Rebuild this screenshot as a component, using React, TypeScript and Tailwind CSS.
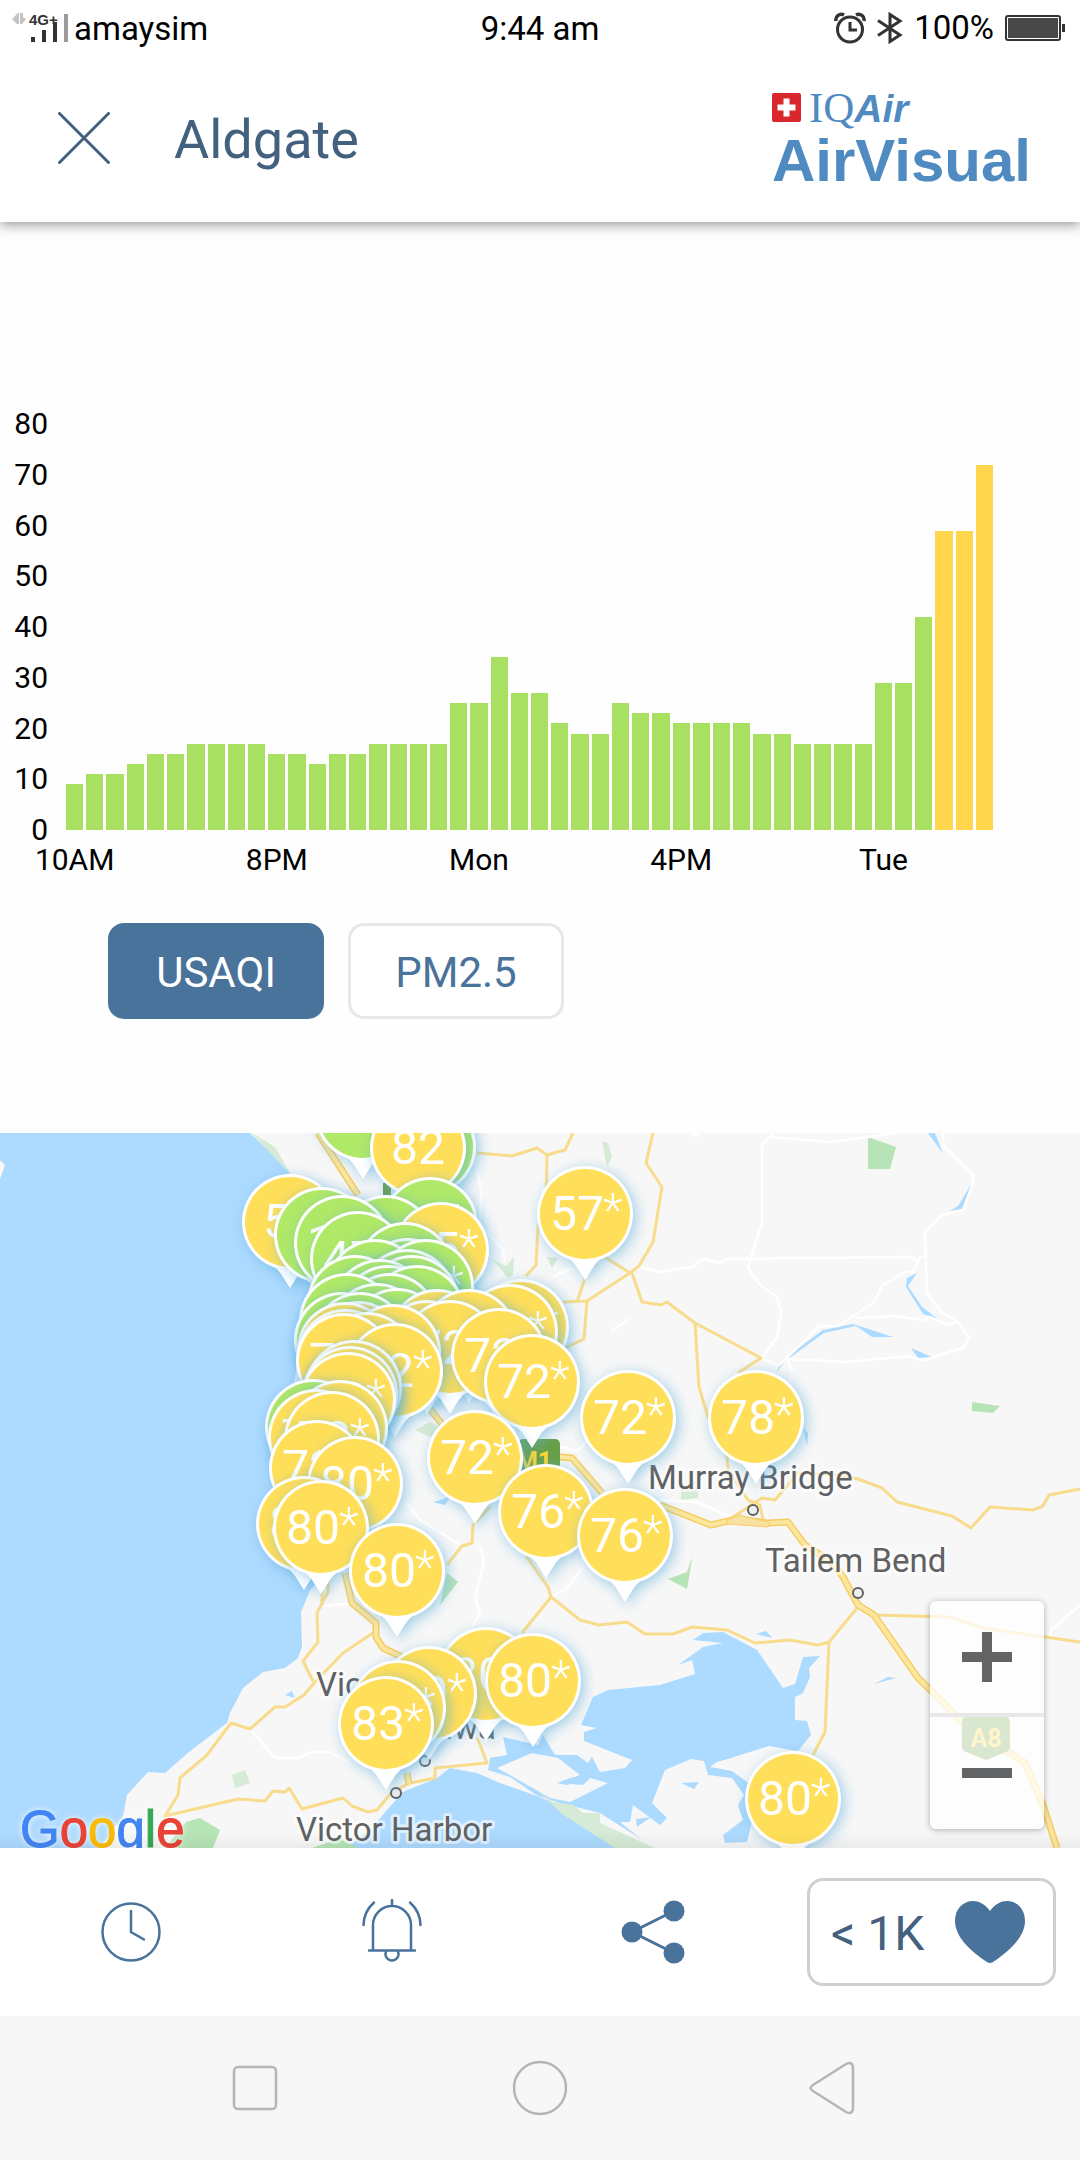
import { useState } from 'react';
import clsx from 'clsx';

type Metric = 'USAQI' | 'PM2.5';
type Level = 'good' | 'moderate';

interface Pin {
  x: number;
  y: number;
  level: Level;
  value?: string;
  estimated?: boolean;
}

const HOURS = [
  9, 11, 11, 13, 15, 15, 17, 17, 17, 17, 15, 15, 13, 15, 15, 17, 17, 17, 17, 25, 25, 34, 27, 27, 21,
  19, 19, 25, 23, 23, 21, 21, 21, 21, 19, 19, 17, 17, 17, 17, 29, 29, 42, 59, 59, 72,
];
const MAX_AQI = 80;
const Y_TICKS = [80, 70, 60, 50, 40, 30, 20, 10, 0];
const X_TICKS: Record<number, string> = { 0: '10AM', 10: '8PM', 20: 'Mon', 30: '4PM', 40: 'Tue' };

const good = (x: number, y: number, value?: string, estimated = true): Pin => ({
  x,
  y,
  level: 'good',
  value,
  estimated,
});
const moderate = (x: number, y: number, value?: string, estimated = true): Pin => ({
  x,
  y,
  level: 'moderate',
  value,
  estimated,
});

// Painted in order, the later ones on top
const PINS: Pin[] = [
  good(363, 1113),
  good(428, 1147),
  moderate(418, 1148, '82', false),
  moderate(585, 1214, '57'),
  moderate(290, 1222, '52', false),
  good(430, 1225, '21'),
  good(322, 1235),
  good(386, 1243),
  good(342, 1243, '14'),
  moderate(441, 1250, '55'),
  good(358, 1259, '47'),
  good(405, 1270),
  good(408, 1286),
  good(375, 1287),
  good(426, 1287, '38'),
  good(407, 1297),
  good(412, 1303),
  good(355, 1303),
  good(380, 1307),
  good(388, 1313),
  good(417, 1313),
  good(390, 1321),
  good(347, 1321),
  moderate(521, 1327, '72'),
  good(377, 1331),
  moderate(510, 1332, '72'),
  good(397, 1336),
  moderate(437, 1337),
  moderate(469, 1337),
  good(342, 1340),
  good(360, 1340),
  moderate(427, 1348),
  moderate(450, 1348, '72'),
  moderate(358, 1349),
  moderate(345, 1350),
  moderate(393, 1352),
  moderate(499, 1356, '72'),
  moderate(345, 1357),
  moderate(367, 1360),
  moderate(344, 1361, '72'),
  moderate(395, 1371, '72'),
  moderate(532, 1382, '72'),
  moderate(354, 1388),
  moderate(350, 1394),
  moderate(348, 1400, '72'),
  moderate(628, 1418, '72'),
  moderate(756, 1418, '78'),
  good(313, 1427),
  moderate(340, 1428),
  moderate(316, 1437, '72'),
  moderate(332, 1439, '72'),
  moderate(475, 1458, '72'),
  moderate(317, 1468, '72'),
  moderate(355, 1484, '80'),
  moderate(546, 1512, '76'),
  moderate(304, 1524, '80'),
  moderate(321, 1528, '80'),
  moderate(625, 1536, '76'),
  moderate(397, 1571, '80'),
  moderate(486, 1675, '80'),
  moderate(533, 1681, '80'),
  moderate(429, 1694, '80'),
  moderate(398, 1708, '80'),
  moderate(386, 1724, '83'),
  moderate(793, 1799, '80'),
];

const TOWNS = [
  { name: 'Murray Bridge', x: 648, y: 1489, dot: [753, 1510] },
  { name: 'Tailem Bend', x: 765, y: 1572, dot: [858, 1593] },
  { name: 'Vic', x: 316, y: 1696 },
  { name: 'Goolwa', x: 385, y: 1739, dot: [425, 1761] },
  { name: 'Victor Harbor', x: 296, y: 1841, dot: [396, 1793] },
];

const WATER = [
  '0,1133 250,1133 269,1151 289,1172 310,1230 318,1300 300,1340 292,1400 300,1450 310,1500 320,1580 310,1590 301,1612 302,1647 298,1658 285,1668 263,1672 243,1688 230,1713 227,1723 189,1752 165,1773 148,1772 127,1795 123,1816 100,1848 0,1848',
  // ocean south of the peninsula
  '345,1848 370,1830 387,1810 403,1792 437,1778 450,1768 477,1773 500,1783 537,1796 560,1806 600,1825 640,1848',
  // lakes and the lagoon
  '503,1737 507,1755 490,1758 488,1770 510,1777 538,1796 560,1803 600,1813 655,1848 750,1848 747,1842 760,1790 747,1782 732,1771 710,1767 717,1762 728,1759 769,1746 798,1751 811,1735 807,1721 795,1720 795,1697 803,1693 810,1677 809,1668 820,1656 803,1657 795,1684 783,1688 757,1650 723,1632 703,1633 693,1640 723,1643 703,1647 678,1665 692,1660 695,1674 660,1685 608,1690 593,1697 581,1725 597,1728 584,1732 584,1741 632,1760 625,1768 600,1772 592,1757 588,1763 577,1755 555,1755 543,1735 538,1745',
  '928,1133 935,1133 943,1154',
  '972,1183 963,1209 950,1211 958,1206',
  '907,1278 917,1273 908,1286 922,1307 938,1319 923,1314 906,1287',
  '911,1348 932,1357 918,1358',
  '853,1324 893,1337 872,1337',
  '776,1373 781,1361 823,1330 853,1324 856,1326 824,1333 784,1362',
  '803,1428 808,1433 807,1446',
  '433,1502 450,1497 445,1505',
  '756,1634 766,1631 772,1638',
  '874,1684 888,1677 896,1678',
  '285,1695 292,1691 295,1698',
];

const ISLANDS = [
  '497,1768 532,1753 558,1758 580,1775 558,1783 583,1785 590,1778 608,1783 570,1802 550,1798 510,1775',
  '691,1759 704,1761 708,1775 732,1778 744,1795 738,1805 743,1820 723,1835 725,1843 747,1842 750,1848 652,1848 620,1822 630,1822 633,1805 660,1825 667,1818 652,1803 665,1770',
];

const PARKS = [
  { points: '868,1137 896,1147 890,1169 868,1169', fill: '#b7e4b7' },
  { points: '972,1402 1000,1406 993,1413 972,1411', fill: '#b7e4b7' },
  { points: '668,1579 687,1572 692,1557 690,1571 687,1589', fill: '#b7e4b7' },
  { points: '602,1141 608,1143 612,1156 607,1167', fill: '#d5ebd5' },
  { points: '252,1133 275,1147 290,1173 272,1155', fill: '#d5ebd5' },
  { points: '493,1260 506,1266 514,1257 513,1275 508,1278', fill: '#d5ebd5' },
  { points: '547,1257 558,1258 552,1268', fill: '#d5ebd5' },
  { points: '415,1430 430,1422 446,1430 430,1437', fill: '#d5ebd5' },
  { points: '232,1775 245,1770 250,1783 235,1788', fill: '#d5ebd5' },
  { points: '447,1573 458,1582 440,1605', fill: '#b7e4b7' },
  { points: '681,1490 698,1480 698,1498 681,1500', fill: '#d5ebd5' },
  { points: '186,1822 200,1818 220,1830 213,1848 165,1848', fill: '#b7e4b7' },
  { points: '312,1848 340,1838 358,1848', fill: '#b7e4b7' },
  { points: '538,1791 553,1802 573,1805 583,1813 600,1813 600,1823 655,1848 615,1848 562,1814', fill: '#d5ebd5' },
];

const LOCAL_ROADS = [
  '770,1137 832,1142 897,1133',
  '773,1133 762,1145 762,1222 748,1268 760,1285 777,1297 781,1313 777,1337 762,1358 778,1366 820,1326 838,1326 873,1303 883,1285 905,1272 913,1272 920,1257 926,1257',
  '637,1266 660,1272 692,1267 703,1259 720,1263 727,1259 913,1257 919,1263',
  '943,1133 943,1145 973,1175 973,1183 963,1210 942,1215 925,1232 927,1293 942,1313 958,1322 969,1338 963,1348 933,1357 923,1361 908,1356 847,1362 787,1359 792,1371',
  '855,1318 897,1316 923,1320 930,1317 947,1325 958,1322',
  '611,1331 630,1319',
  '691,1133 696,1136 700,1133',
  '480,1545 484,1562 475,1598 480,1613 472,1627',
  '407,1503 420,1520 462,1546',
  '552,1597 567,1588 583,1567',
  '320,1606 357,1603',
  '250,1729 275,1758 298,1758 312,1752 330,1752 350,1763',
  '1050,1637 1051,1630 1080,1605',
  '977,1795 997,1780 1023,1767',
  '477,1170 481,1190 480,1225 503,1250 505,1262',
  '660,1500 697,1502 730,1517',
  '560,1447 577,1451 586,1442',
  '553,1277 572,1268',
];

const MAIN_ROADS = [
  '653,1133 646,1163 662,1187 653,1242 639,1266 630,1273 587,1301 563,1302',
  '587,1301 584,1339 565,1348',
  '585,1278 577,1302',
  '600,1254 630,1273',
  '632,1273 642,1302 661,1305 667,1302 695,1323 761,1358 738,1373',
  '695,1323 699,1387 708,1417 727,1457 728,1470 748,1500 760,1505 763,1520',
  '733,1517 762,1498 775,1500 798,1473 837,1475 858,1479 882,1488 897,1502 952,1516 971,1528 990,1507 1033,1510 1043,1506 1049,1495 1080,1489',
  '477,1153 512,1156 537,1148 547,1155 565,1150 573,1133',
  '547,1155 546,1203 538,1227 536,1265 526,1276',
  '328,1580 328,1592 317,1613 318,1642 303,1661 313,1681',
  '322,1585 322,1605',
  '373,1633 343,1653 315,1682 304,1695 285,1707 275,1707 250,1729 231,1723 207,1755 180,1778 178,1795 165,1816 238,1799 265,1801 273,1791 285,1792 289,1788 302,1809 343,1798 352,1806 368,1812 377,1810 392,1792 410,1783 435,1778 435,1768 487,1763 477,1737',
  '447,1565 462,1546 472,1543 473,1525 490,1507',
  '526,1556 548,1587 551,1597 522,1633',
  '551,1597 580,1620 599,1625 627,1622 645,1634 673,1634 692,1627 727,1630 755,1643 790,1640 818,1645 829,1642 858,1607',
  '829,1642 825,1732 813,1755',
  '875,1615 950,1617 982,1628 1080,1642',
];

const HIGHWAYS = [
  '318,1133 358,1195',
  '345,1573 352,1603 376,1623 376,1637 383,1648 402,1657',
  '430,1409 442,1424',
  '560,1457 572,1458 602,1493',
  '660,1505 711,1525 737,1519 768,1523 788,1522 805,1545 833,1563 843,1577 858,1605 874,1615 918,1678 943,1702 962,1722 1025,1763 1043,1805 1057,1848',
  '407,1773 409,1784',
];

export default function App() {
  return (
    <div className="flex min-h-screen flex-col bg-[#fefefe] font-[Roboto,sans-serif] text-black">
      <div className="relative z-10 bg-white shadow-[0_3px_12px_rgba(0,0,0,0.4)]">
        <StatusBar />
        <Header />
      </div>
      <main className="flex flex-1 flex-col">
        <History />
        <StationMap />
      </main>
      <ActionBar />
      <SystemNav />
    </div>
  );
}

function StatusBar() {
  return (
    <div className="grid h-14 grid-cols-[1fr_auto_1fr] items-center pt-[2px] text-[33px] leading-10">
      <div className="flex items-center gap-1 pl-3">
        <svg width="58" height="34" viewBox="0 0 58 34" aria-hidden="true">
          <path d="M0 7l5-5v10zM5 1h2v11H5zM8 1h3v4l3 2-4 5H8z" fill="#c4c4c4" />
          <text x="17" y="13" fontFamily="Liberation Sans" fontSize="15" fontWeight="700" fill="#333">
            4G+
          </text>
          <path d="M19 25h4v5h-4zM30 18h4v12h-4zM41 10h4v20h-4z" fill="#333" />
          <path d="M52 2h4v28h-4z" fill="#9b9b9b" />
        </svg>
        <span>amaysim</span>
      </div>
      <span>9:44 am</span>
      <div className="flex items-center justify-end gap-[11px] pr-[15px] pb-[2px]">
        <svg width="32" height="32" viewBox="0 0 32 32" fill="none" stroke="#333" aria-hidden="true">
          <circle cx="16" cy="17.500" r="12.500" strokeWidth="3" />
          <path d="M16 10v8h7" strokeWidth="3" />
          <path d="M2 9a5.500 5.500 0 0 1 8-6M30 9a5.500 5.500 0 0 0-8-6" strokeWidth="3.500" />
        </svg>
        <svg width="26" height="32" viewBox="0 0 26 32" fill="none" stroke="#333" aria-hidden="true">
          <path d="M1 8.500l22 14.500-10 6.500V2.500L23 9 1 23.500" strokeWidth="3" />
        </svg>
        <span>100%</span>
        <svg width="60" height="28" viewBox="0 0 60 28" aria-hidden="true">
          <rect x="1" y="2" width="54" height="24" rx="2" fill="none" stroke="#333" strokeWidth="2" />
          <path d="M3 4h50v20H3z" fill="#484848" />
          <path d="M57 10h3v8h-3z" fill="#333" />
        </svg>
      </div>
    </div>
  );
}

function Header() {
  return (
    <header className="flex h-[166px] items-center justify-between pr-[49px] pb-[2px] pl-[58px]">
      <div className="flex items-center gap-16">
        <button type="button" aria-label="Close">
          <svg width="52" height="52" viewBox="0 0 52 52" stroke="#43607f" strokeWidth="3" strokeLinecap="round">
            <path d="M1.500 1.500l49 49M50.500 1.500l-49 49" />
          </svg>
        </button>
        <h1 className="pt-1 text-[54px] leading-16 text-[#43607f]">Aldgate</h1>
      </div>
      <div className="flex flex-col pb-1 text-[#4f8bc0]">
        <div className="flex items-baseline gap-2 leading-10">
          <svg width="29" height="29" viewBox="0 0 29 29" aria-hidden="true">
            <rect width="29" height="29" rx="2" fill="#d9272d" />
            <path d="M11.500 5.500h6v6h6v6h-6v6h-6v-6h-6v-6h6z" fill="#fff" />
          </svg>
          <span>
            <span className="font-['Liberation_Serif',serif] text-[43px]">IQ</span>
            <span className="font-['Liberation_Sans',sans-serif] text-[39px] font-bold italic">Air</span>
          </span>
        </div>
        <span className="font-['Liberation_Sans',sans-serif] text-[60px] leading-12 font-bold">AirVisual</span>
      </div>
    </header>
  );
}

function History() {
  const [metric, setMetric] = useState<Metric>('USAQI');

  return (
    <section className="flex flex-col pt-[202px] pb-[114px]">
      <div className="flex pr-[87px] text-[30px] leading-10">
        <div className="-mt-5 mb-[30px] flex w-12 shrink-0 flex-col justify-between text-right">
          {Y_TICKS.map((tick) => (
            <span key={tick}>{tick}</span>
          ))}
        </div>
        <div className="ml-[18px] flex-1">
          <div className="flex h-[406px] items-end gap-[3px]">
            {HOURS.map((aqi, i) => (
              <div
                key={i}
                className={clsx('flex-1', aqi > 50 ? 'bg-[#ffd54c]' : 'bg-[#a8e161]')}
                style={{ height: `${(aqi / MAX_AQI) * 100}%` }}
              />
            ))}
          </div>
          <div className="mt-[10px] flex h-10 gap-[3px]">
            {HOURS.map((_, i) => (
              <div key={i} className="flex min-w-0 flex-1 justify-center whitespace-nowrap">
                {X_TICKS[i]}
              </div>
            ))}
          </div>
        </div>
      </div>

      <div className="mt-[43px] flex gap-6 pl-[108px]">
        {(['USAQI', 'PM2.5'] as Metric[]).map((name) => (
          <button
            key={name}
            type="button"
            aria-pressed={metric === name}
            onClick={() => setMetric(name)}
            className={clsx(
              'h-24 w-[216px] rounded-2xl border-3 pt-[2px] text-[42px]',
              metric === name
                ? 'border-[#4a739b] bg-[#4a739b] text-white'
                : 'border-[#e7e7e7] bg-white text-[#4a739b]',
            )}
          >
            {name}
          </button>
        ))}
      </div>
    </section>
  );
}

function MapPin({ x, y, level, value, estimated }: Pin) {
  return (
    <g
      transform={`translate(${x} ${y})`}
      className="[filter:drop-shadow(3px_3px_7px_rgba(95,175,220,0.6))]"
    >
      <path d="M-20 42q8 4 13 13l7 11 7-11q5-9 13-13z" fill="#fff" />
      <circle r="48" fill="#fff" />
      <circle r="45" fill={level === 'good' ? '#b0e967' : '#ffdf59'} />
      {value && (
        <text x={estimated ? -8 : 0} y="16" textAnchor="middle" fontSize="48" fill="#fff">
          {value}
        </text>
      )}
      {value && estimated && (
        <text x="18" y="12" fontSize="46" fontWeight="300" fill="#fff">
          *
        </text>
      )}
    </g>
  );
}

function StationMap() {
  return (
    <section className="relative overflow-hidden" aria-label="Stations map">
      <svg
        viewBox="0 1133 1080 715"
        preserveAspectRatio="xMidYMid slice"
        className="block h-[715px] w-full bg-[#f7f7f7]"
        fontFamily="Roboto, sans-serif"
      >
        {WATER.map((points) => (
          <polygon key={points} points={points} fill="#addaff" />
        ))}
        {ISLANDS.map((points) => (
          <polygon key={points} points={points} fill="#f7f7f7" />
        ))}
        <path
          d="M557 1783l16-6 3 5-9 3zM636 1819l15-2-14 10zM681 1783l18-1-5 7z"
          fill="#addaff"
        />
        <path d="M0 1160l5 5-5 14z" fill="#f7f7f7" />
        {PARKS.map(({ points, fill }) => (
          <polygon key={points} points={points} fill={fill} />
        ))}
        <g fill="none" strokeLinejoin="round">
          {LOCAL_ROADS.map((points) => (
            <polyline key={points} points={points} stroke="#fff" strokeWidth="2.500" />
          ))}
          {MAIN_ROADS.map((points) => (
            <polyline key={points} points={points} stroke="#f8dc8c" strokeWidth="3" />
          ))}
          {HIGHWAYS.map((points) => (
            <polyline key={points} points={points} stroke="#f6cd62" strokeWidth="7" />
          ))}
          {HIGHWAYS.map((points) => (
            <polyline key={points} points={points} stroke="#fce7a0" strokeWidth="4" />
          ))}
        </g>
        <path d="M727 1520l12-5 25 6 6 2-2 4-41-3z" fill="#f8e0a0" stroke="#f6cd62" />

        <g fontWeight="700" fontSize="25" textAnchor="middle">
          <rect x="518" y="1439" width="42" height="42" rx="5" fill="#689f47" />
          <text x="534" y="1470" fill="#fdd835">
            M1
          </text>
          <path d="M383 1183h8v14h-8z" fill="#689f47" />
          <path d="M967 1717h38q5 0 5 5v24q0 5-4 6l-20 8-20-8q-4-1-4-6v-24q0-5 5-5z" fill="#689f47" />
          <text x="986" y="1747" fill="#fdd835">
            A8
          </text>
        </g>

        {TOWNS.map(({ name, x, y, dot }) => (
          <g key={name}>
            {dot && <circle cx={dot[0]} cy={dot[1]} r="5" fill="#f0f0f0" stroke="#5f6163" strokeWidth="2" />}
            <text
              x={x}
              y={y}
              fontSize="33"
              fill="#5f6163"
              stroke="#fff"
              strokeOpacity="0.6"
              strokeWidth="6"
              strokeLinejoin="round"
              paintOrder="stroke"
            >
              {name}
            </text>
          </g>
        ))}

        {PINS.map((pin, i) => (
          <MapPin key={i} {...pin} />
        ))}

        <text
          x="20"
          y="1847"
          fontFamily="Liberation Sans, sans-serif"
          fontSize="51"
          strokeWidth="1"
          className="[filter:drop-shadow(0_0_3px_rgba(255,255,255,0.9))]"
        >
          <tspan fill="#4285f4" stroke="#4285f4">G</tspan>
          <tspan fill="#ea4335" stroke="#ea4335">o</tspan>
          <tspan fill="#fbbc05" stroke="#fbbc05">o</tspan>
          <tspan fill="#4285f4" stroke="#4285f4">g</tspan>
          <tspan fill="#34a853" stroke="#34a853">l</tspan>
          <tspan fill="#ea4335" stroke="#ea4335">e</tspan>
        </text>
      </svg>

      <div className="absolute right-9 bottom-[19px] flex w-[114px] flex-col divide-y-4 divide-[#e8e8e8] rounded-md bg-white/75 shadow-[0_1px_6px_rgba(0,0,0,0.3)]">
        <button type="button" aria-label="Zoom in" className="flex h-29 items-center justify-center">
          <svg width="50" height="50" viewBox="0 0 50 50" fill="#636466">
            <path d="M20 0h10v20h20v10H30v20H20V30H0V20h20z" />
          </svg>
        </button>
        <button type="button" aria-label="Zoom out" className="flex h-28 items-center justify-center">
          <svg width="50" height="10" viewBox="0 0 50 10" fill="#636466">
            <path d="M0 0h50v10H0z" />
          </svg>
        </button>
      </div>
      <div className="pointer-events-none absolute inset-x-0 bottom-0 h-4 bg-linear-to-b from-transparent to-black/5" />
    </section>
  );
}

function ActionBar() {
  return (
    <footer className="flex h-[168px] items-center bg-white pr-6">
      <button type="button" aria-label="History" className="flex flex-1 justify-center">
        <svg width="64" height="66" viewBox="0 0 64 66" fill="none" stroke="#4a739b" strokeWidth="2.500" strokeLinecap="round">
          <circle cx="32" cy="33" r="28.500" />
          <path d="M32 12v21l13 7.500" />
        </svg>
      </button>
      <button type="button" aria-label="Alerts" className="flex flex-1 justify-center">
        <svg width="64" height="66" viewBox="0 0 64 66" fill="none" stroke="#4a739b" strokeWidth="2.500" strokeLinecap="round">
          <path d="M32 1v6M13 51V26a19 19 0 0 1 38 0v25M9 51.500h46" />
          <path d="M26 52.500a6.500 6.500 0 1 0 12 0" />
          <path d="M14 3.500Q3.500 13 3.500 26M50 3.500Q60.500 13 60.500 26" />
        </svg>
      </button>
      <button type="button" aria-label="Share" className="flex flex-1 justify-center">
        <svg width="64" height="66" viewBox="0 0 64 66" fill="#4a739b">
          <path d="M53 12L11 33l42 21" fill="none" stroke="#4a739b" strokeWidth="3" />
          <circle cx="53" cy="12" r="10.500" />
          <circle cx="11" cy="33" r="10.500" />
          <circle cx="53" cy="54" r="10.500" />
        </svg>
      </button>
      <button
        type="button"
        aria-label="Add to favourites, less than 1K followers"
        className="ml-6 flex h-[108px] w-[249px] items-center justify-between rounded-2xl border-3 border-[#d0d0d0] pr-7 pl-[21px] text-[48px] text-[#43607f]"
      >
        <span className="pt-1">&lt; 1K</span>
        <svg width="70" height="62" viewBox="0 0 70 62" fill="#4a739b" aria-hidden="true">
          <path d="M35 10C40 3 46 0 52 0c10 0 18 8 18 20 0 15-14 29-32 41q-3 2-6 0C14 49 0 35 0 20 0 8 8 0 18 0c6 0 12 3 17 10z" />
        </svg>
      </button>
    </footer>
  );
}

function SystemNav() {
  return (
    <nav className="flex h-36 items-center justify-center gap-58 bg-[#f7f7f7]" aria-label="System">
      <button type="button" aria-label="Recent apps">
        <svg width="56" height="56" viewBox="0 0 56 56" fill="none" stroke="#b5b5b5" strokeWidth="2.500">
          <rect x="10" y="7" width="42" height="42" rx="4" />
        </svg>
      </button>
      <button type="button" aria-label="Home">
        <svg width="56" height="56" viewBox="0 0 56 56" fill="none" stroke="#b5b5b5" strokeWidth="2.500">
          <circle cx="28" cy="28" r="26" />
        </svg>
      </button>
      <button type="button" aria-label="Back">
        <svg width="56" height="56" viewBox="0 0 56 56" fill="none" stroke="#b5b5b5" strokeWidth="2.500">
          <path d="M46 4q6-3 7 3v42q-1 6-7 3L13 31q-5-3 0-6z" />
        </svg>
      </button>
    </nav>
  );
}
